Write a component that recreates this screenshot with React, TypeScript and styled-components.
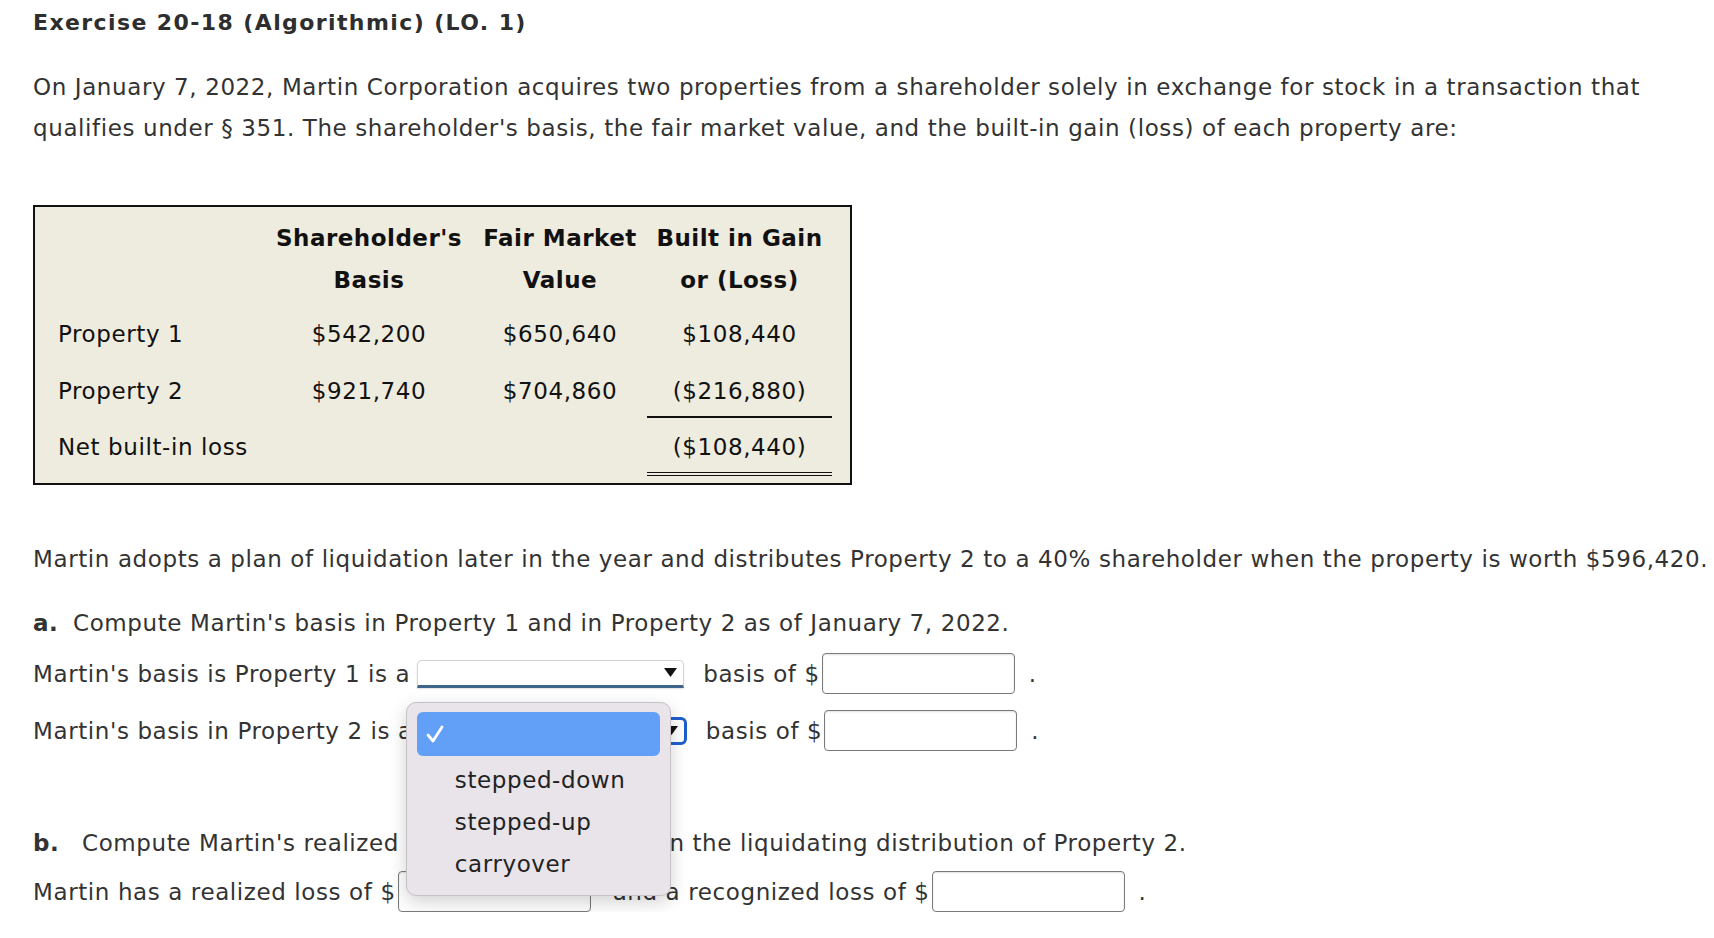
import React from "react";
import styled, { createGlobalStyle } from "styled-components";

const GlobalStyle = createGlobalStyle`
  html, body {
    margin: 0;
    padding: 0;
    background: #ffffff;
  }
  body {
    font-family: "DejaVu Sans", Verdana, sans-serif;
    font-size: 23px;
    letter-spacing: 0.6px;
    color: #333333;
  }
`;

const rows = [
  { label: "Property 1", basis: "$542,200", fmv: "$650,640", gain: "$108,440" },
  { label: "Property 2", basis: "$921,740", fmv: "$704,860", gain: "($216,880)" },
];

const options = ["stepped-down", "stepped-up", "carryover"];

function CheckIcon() {
  return (
    <svg width="20" height="20" viewBox="0 0 20 20">
      <path
        d="M3 11 L8 17 L17 3"
        fill="none"
        stroke="#ffffff"
        strokeWidth="2.8"
        strokeLinecap="round"
        strokeLinejoin="round"
      />
    </svg>
  );
}

function Caret() {
  return (
    <svg width="13" height="9" viewBox="0 0 13 9">
      <path d="M0 0 H13 L6.5 9 Z" fill="#111111" />
    </svg>
  );
}

function App() {
  return (
    <>
      <GlobalStyle />
      <Page>
        <Title>Exercise 20-18 (Algorithmic) (LO. 1)</Title>
        <Intro>
          On January 7, 2022, Martin Corporation acquires two properties from a
          shareholder solely in exchange for stock in a transaction that
          qualifies under § 351. The shareholder's basis, the fair market value,
          and the built-in gain (loss) of each property are:
        </Intro>

        <DataTable>
          <HeadCell />
          <HeadCell>
            Shareholder's
            <br />
            Basis
          </HeadCell>
          <HeadCell>
            Fair Market
            <br />
            Value
          </HeadCell>
          <HeadCell>
            Built in Gain
            <br />
            or (Loss)
          </HeadCell>

          {rows.map((r, i) => (
            <React.Fragment key={r.label}>
              <BodyCell $first={i === 0} $align="left">
                {r.label}
              </BodyCell>
              <BodyCell $first={i === 0}>{r.basis}</BodyCell>
              <BodyCell $first={i === 0}>{r.fmv}</BodyCell>
              <BodyCell $first={i === 0} $rule={i === 1}>
                {r.gain}
              </BodyCell>
            </React.Fragment>
          ))}

          <TotalCell $align="left">Net built-in loss</TotalCell>
          <TotalCell />
          <TotalCell />
          <TotalCell $rule>($108,440)</TotalCell>
        </DataTable>

        <Para>
          Martin adopts a plan of liquidation later in the year and distributes
          Property 2 to a 40% shareholder when the property is worth $596,420.
        </Para>

        <PartLine>
          <PartMark>a.</PartMark>
          Compute Martin's basis in Property 1 and in Property 2 as of January
          7, 2022.
        </PartLine>

        <AnswerRow>
          Martin's basis is Property 1 is a
          <SelectWrap>
            <SelectBox>
              <Caret />
            </SelectBox>
          </SelectWrap>
          <After>basis of $</After>
          <Field />
          <Dot>.</Dot>
        </AnswerRow>

        <AnswerRow $top={16}>
          Martin's basis in Property 2 is a
          <SelectWrap>
            <SelectBox $focused>
              <Caret />
            </SelectBox>
            <Menu>
              <MenuItem $active>
                <CheckIcon />
              </MenuItem>
              {options.map((o) => (
                <MenuItem key={o}>{o}</MenuItem>
              ))}
            </Menu>
          </SelectWrap>
          <After>basis of $</After>
          <Field />
          <Dot>.</Dot>
        </AnswerRow>

        <PartLine $top={77}>
          <PartMark $wide>b.</PartMark>
          Compute Martin's realized and recognized loss on the liquidating
          distribution of Property 2.
        </PartLine>

        <AnswerRow $top={13}>
          Martin has a realized loss of $
          <Field />
          <After $gap={22}>and a recognized loss of $</After>
          <Field />
          <Dot>.</Dot>
        </AnswerRow>
      </Page>
    </>
  );
}

const Page = styled.div`
  padding: 8px 0 0 33px;
`;

const Title = styled.h1`
  margin: 0;
  font-size: 22px;
  letter-spacing: 1.4px;
  line-height: 30px;
  font-weight: bold;
  color: #2e2e2e;
`;

const Intro = styled.p`
  margin: 29px 0 0;
  width: 1670px;
  line-height: 41px;
`;

const DataTable = styled.div`
  margin-top: 56px;
  width: 819px;
  box-sizing: border-box;
  border: 2px solid #111111;
  background: #eeebdf;
  padding: 10px 18px 7px 23px;
  display: grid;
  grid-template-columns: 207px 208px 174px 185px;
  color: #111111;
`;

const HeadCell = styled.div`
  text-align: center;
  font-weight: bold;
  line-height: 42px;
  letter-spacing: 0.5px;
  white-space: nowrap;
`;

const BodyCell = styled.div<{ $first?: boolean; $align?: string; $rule?: boolean }>`
  text-align: ${(p) => p.$align || "center"};
  line-height: ${(p) => (p.$first ? "66px" : "44px")};
  padding-bottom: ${(p) => (p.$first ? "0" : "3px")};
  border-bottom: 2px solid ${(p) => (p.$rule ? "#111111" : "transparent")};
  white-space: nowrap;
`;

const TotalCell = styled.div<{ $align?: string; $rule?: boolean }>`
  text-align: ${(p) => p.$align || "center"};
  line-height: 30px;
  padding: 14px 0 10px;
  border-bottom: 4px double ${(p) => (p.$rule ? "#111111" : "transparent")};
  white-space: nowrap;
`;

const Para = styled.p`
  margin: 59px 0 0;
  line-height: 30px;
  white-space: nowrap;
`;

const PartLine = styled.p<{ $top?: number }>`
  margin: ${(p) => p.$top ?? 34}px 0 0;
  line-height: 30px;
  white-space: nowrap;
`;

const PartMark = styled.b<{ $wide?: boolean }>`
  display: inline-block;
  width: ${(p) => (p.$wide ? "49px" : "40px")};
`;

const AnswerRow = styled.div<{ $top?: number }>`
  margin-top: ${(p) => p.$top ?? 15}px;
  display: flex;
  align-items: center;
  height: 41px;
  white-space: nowrap;
`;

const SelectWrap = styled.div`
  position: relative;
  margin-left: 7px;
  display: flex;
`;

const SelectBox = styled.div<{ $focused?: boolean }>`
  box-sizing: border-box;
  width: 267px;
  height: 28px;
  background: #ffffff;
  display: flex;
  align-items: center;
  justify-content: flex-end;
  padding-right: 6px;
  ${(p) =>
    p.$focused
      ? `
    border: 3px solid #1f5fcc;
    border-radius: 6px;
  `
      : `
    border: 1px solid #d4d4d4;
    border-bottom: 3px solid #3d6589;
    border-radius: 5px 5px 0 0;
    box-shadow: 0 1px 2px rgba(0, 0, 0, 0.12);
  `}
`;

const Menu = styled.div`
  position: absolute;
  left: -14px;
  top: -15px;
  width: 265px;
  box-sizing: border-box;
  padding: 9px 10px 10px;
  background: #e8e4e9;
  border: 1px solid #c4c2c6;
  border-radius: 10px;
  box-shadow: 0 6px 18px rgba(0, 0, 0, 0.18);
  z-index: 5;
`;

const MenuItem = styled.div<{ $active?: boolean }>`
  height: ${(p) => (p.$active ? "44px" : "42px")};
  margin-bottom: ${(p) => (p.$active ? "3px" : "0")};
  display: flex;
  align-items: center;
  padding-left: ${(p) => (p.$active ? "8px" : "38px")};
  border-radius: 6px;
  background: ${(p) => (p.$active ? "#62a0f8" : "transparent")};
  color: #222222;
`;

const After = styled.span<{ $gap?: number }>`
  margin-left: ${(p) => p.$gap ?? 19}px;
`;

const Field = styled.div`
  box-sizing: border-box;
  width: 193px;
  height: 41px;
  margin-left: 2px;
  border: 1.5px solid #7a7a7a;
  border-radius: 4px;
  background: #ffffff;
  box-shadow: inset 0 1px 2px rgba(0, 0, 0, 0.12);
`;

const Dot = styled.span`
  margin-left: 14px;
`;

export default App;
